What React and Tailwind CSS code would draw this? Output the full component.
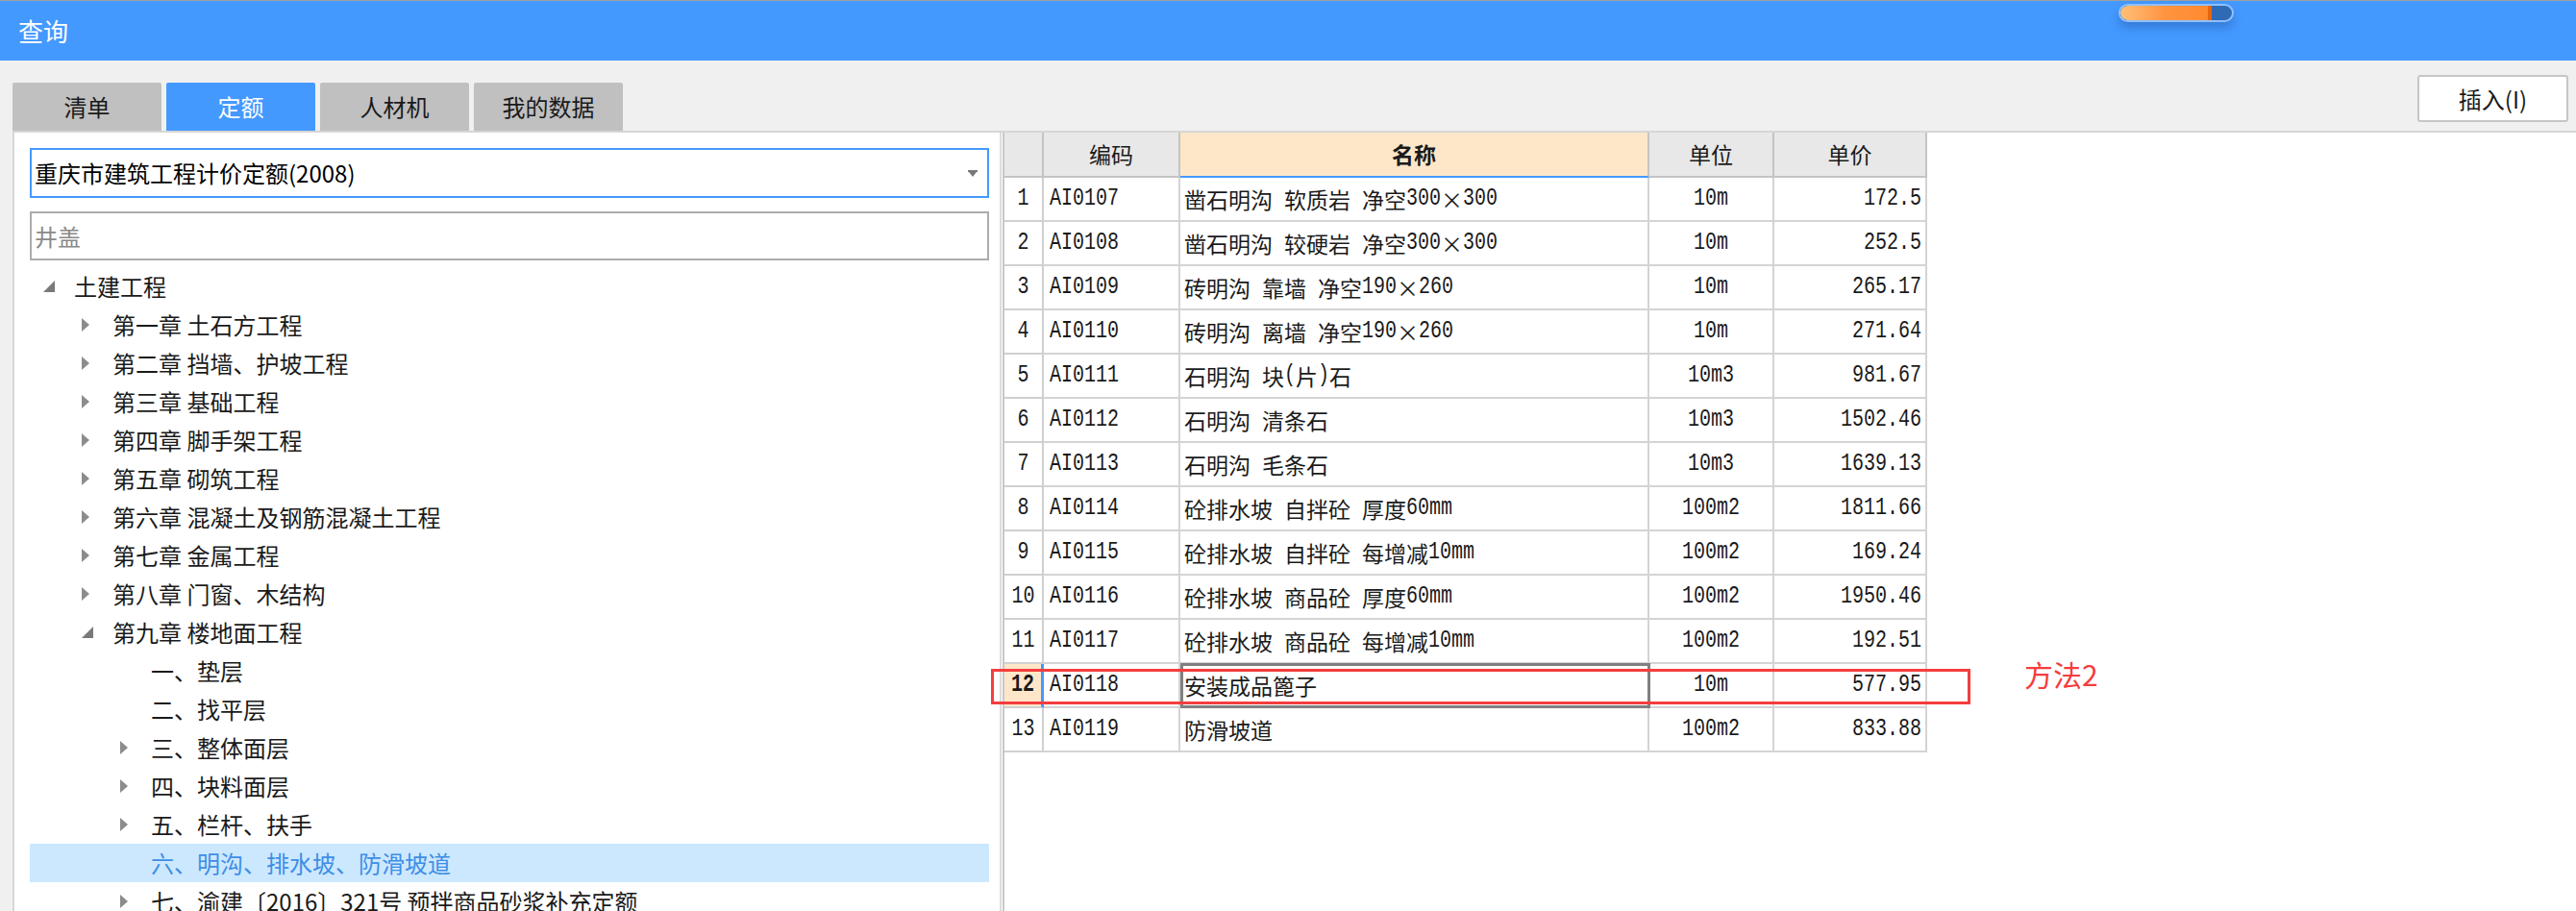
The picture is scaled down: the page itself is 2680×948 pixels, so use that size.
import React from "react";

const tree = [
  { level: 0, icon: "open", label: "土建工程" },
  { level: 1, icon: "closed", label: "第一章 土石方工程" },
  { level: 1, icon: "closed", label: "第二章 挡墙、护坡工程" },
  { level: 1, icon: "closed", label: "第三章 基础工程" },
  { level: 1, icon: "closed", label: "第四章 脚手架工程" },
  { level: 1, icon: "closed", label: "第五章 砌筑工程" },
  { level: 1, icon: "closed", label: "第六章 混凝土及钢筋混凝土工程" },
  { level: 1, icon: "closed", label: "第七章 金属工程" },
  { level: 1, icon: "closed", label: "第八章 门窗、木结构" },
  { level: 1, icon: "open", label: "第九章 楼地面工程" },
  { level: 2, icon: null, label: "一、垫层" },
  { level: 2, icon: null, label: "二、找平层" },
  { level: 2, icon: "closed", label: "三、整体面层" },
  { level: 2, icon: "closed", label: "四、块料面层" },
  { level: 2, icon: "closed", label: "五、栏杆、扶手" },
  { level: 2, icon: null, label: "六、明沟、排水坡、防滑坡道", selected: true },
  { level: 2, icon: "closed", label: "七、渝建〔2016〕321号 预拌商品砂浆补充定额" },
];

const rows = [
  ["AI0107", "凿石明沟 软质岩 净空300×300", "10m", "172.5"],
  ["AI0108", "凿石明沟 较硬岩 净空300×300", "10m", "252.5"],
  ["AI0109", "砖明沟 靠墙 净空190×260", "10m", "265.17"],
  ["AI0110", "砖明沟 离墙 净空190×260", "10m", "271.64"],
  ["AI0111", "石明沟 块(片)石", "10m3", "981.67"],
  ["AI0112", "石明沟 清条石", "10m3", "1502.46"],
  ["AI0113", "石明沟 毛条石", "10m3", "1639.13"],
  ["AI0114", "砼排水坡 自拌砼 厚度60mm", "100m2", "1811.66"],
  ["AI0115", "砼排水坡 自拌砼 每增减10mm", "100m2", "169.24"],
  ["AI0116", "砼排水坡 商品砼 厚度60mm", "100m2", "1950.46"],
  ["AI0117", "砼排水坡 商品砼 每增减10mm", "100m2", "192.51"],
  ["AI0118", "安装成品篦子", "10m", "577.95"],
  ["AI0119", "防滑坡道", "100m2", "833.88"],
];

const indent = ["pl-0", "pl-[40px]", "pl-[80px]"];

// ascii runs in a narrow mono face, CJK in Noto
const Mixed = ({ text, bold }) =>
  text
    .split(/([\x20-\x7e]+)/)
    .filter(Boolean)
    .map((p, i) =>
      /^[\x20-\x7e]+$/.test(p) ? (
        <span
          key={i}
          className={`inline-block whitespace-pre scale-y-[1.25] font-['Liberation_Mono',monospace] text-[20px] ${bold ? "font-bold" : ""}`}
        >
          {p}
        </span>
      ) : (
        <span key={i}>{p}</span>
      )
    );

const Arrow = ({ icon }) => {
  if (icon === "open")
    return (
      <svg width="12" height="12" viewBox="0 0 12 12">
        <polygon points="12,0 12,12 0,12" fill="#7a7a7a" />
      </svg>
    );
  if (icon === "closed")
    return (
      <svg width="8" height="14" viewBox="0 0 8 14">
        <polygon points="0,0 8,7 0,14" fill="#8c8c8c" />
      </svg>
    );
  return null;
};

export default function App() {
  const tabs = ["清单", "定额", "人材机", "我的数据"];

  return (
    <div className="w-[2680px] h-[948px] overflow-hidden flex flex-col bg-[#f0f0f0] font-['Noto_Sans_CJK_SC','Noto_Sans',sans-serif] text-[#1a1a1a]">
      {/* title bar */}
      <div className="relative h-[63px] shrink-0 border-t border-[#a0a0a0] bg-[#4499ff] flex items-center pl-[19px]">
        <span className="text-[26px] leading-none text-white">查询</span>
        <div className="absolute left-[2204px] top-[3px] w-[120px] h-[19px] rounded-full border-2 border-[#8ec0ff] bg-[#2f6ab5] shadow-[0_6px_10px_rgba(30,70,140,0.35)] overflow-hidden">
          <div className="h-full w-[82%] rounded-l-full bg-gradient-to-r from-[#ffc078] via-[#ff9440] to-[#ff8a30] border-r-[4px] border-[#e8650f]" />
        </div>
      </div>

      {/* tab row */}
      <div className="h-[73px] shrink-0 flex justify-between pl-[13px] pr-[8px]">
        <div className="self-end flex gap-[5px]">
          {tabs.map((t) => (
            <div
              key={t}
              className={`w-[155px] h-[50px] rounded-t-[2px] flex items-center justify-center text-[24px] ${
                t === "定额" ? "bg-[#4499ff] text-white" : "bg-[#c0c0c0] text-[#1a1a1a]"
              }`}
            >
              {t}
            </div>
          ))}
        </div>
        <button className="mt-[15px] w-[157px] h-[49px] rounded-[3px] border-2 border-[#c6c6c6] bg-white text-[24px] text-[#1a1a1a] flex items-center justify-center">
          插入(I)
        </button>
      </div>

      {/* content */}
      <div className="flex-1 min-h-0 pl-[13px]">
        <div className="h-full flex border-t-2 border-l-2 border-[#d6d6d6] bg-white">
          {/* left panel */}
          <div className="w-[1027px] shrink-0 border-r-2 border-[#dcdcdc] pl-[16px] pr-[11px] pt-[16px] overflow-hidden">
            <div className="h-[52px] border-2 border-[#4499ff] flex items-center justify-between pl-[3px] pr-[10px]">
              <span className="text-[24px] text-black">重庆市建筑工程计价定额(2008)</span>
              <svg width="10" height="7" viewBox="0 0 10 7">
                <rect x="0" y="0" width="10" height="2" fill="#7a7a7a" />
                <polygon points="1,2 9,2 5,7" fill="#7a7a7a" />
              </svg>
            </div>
            <div className="mt-[14px] h-[51px] border-2 border-[#acacac] flex items-center pl-[3px]">
              <span className="text-[24px] text-[#8a8a8a]">井盖</span>
            </div>
            <div className="mt-[7px] flex flex-col">
              {tree.map((n) => (
                <div
                  key={n.label}
                  className={`h-[40px] shrink-0 flex items-center ${indent[n.level]} ${
                    n.selected ? "bg-[#cce8ff] text-[#3d8ee6]" : "text-[#1a1a1a]"
                  }`}
                >
                  <div className="w-[46px] shrink-0 pl-[14px] flex items-center">
                    <Arrow icon={n.icon} />
                  </div>
                  <span className="text-[24px] whitespace-nowrap">{n.label}</span>
                </div>
              ))}
            </div>
          </div>

          <div className="w-[1px] shrink-0" />

          {/* right panel */}
          <div className="relative flex-1 border-l-2 border-[#c8c8c8]">
            <div className="grid grid-cols-[41px_142px_488px_130px_159px] w-fit text-[23px] text-[#1a1a1a]">
              <div className="h-[47px] border-r-2 border-b-2 border-[#c4c4c4] bg-[#e8e8e8]" />
              <div className="h-[47px] border-r-2 border-b-2 border-[#c4c4c4] bg-[#e8e8e8] flex items-center justify-center">编码</div>
              <div className="h-[47px] border-r-2 border-b-2 border-[#c4c4c4] border-b-[#4499ff] bg-[#fee7c9] flex items-center justify-center font-bold">名称</div>
              <div className="h-[47px] border-r-2 border-b-2 border-[#c4c4c4] bg-[#e8e8e8] flex items-center justify-center">单位</div>
              <div className="h-[47px] border-r-2 border-b-2 border-[#c4c4c4] bg-[#e8e8e8] flex items-center justify-center">单价</div>

              {rows.map(([code, name, unit, price], i) => {
                const active = i === 11;
                return (
                  <React.Fragment key={code}>
                    <div
                      className={`h-[46px] border-b-2 border-[#d0d0d0] flex items-center justify-center ${
                        active ? "bg-[#fee7c9] border-r-[3px] border-r-[#4499ff]" : "bg-white border-r-2"
                      }`}
                    >
                      <Mixed text={String(i + 1)} bold={active} />
                    </div>
                    <div className="h-[46px] border-r-2 border-b-2 border-[#d4d4d4] flex items-center pl-[6px]">
                      <Mixed text={code} />
                    </div>
                    <div className="relative h-[46px] border-r-2 border-b-2 border-[#d4d4d4] flex items-center pl-[4px] whitespace-nowrap">
                      <Mixed text={name} />
                      {active && (
                        <div className="absolute left-0 -top-[1px] -right-[3px] -bottom-[2px] border-[3px] border-[#808080]" />
                      )}
                    </div>
                    <div className="h-[46px] border-r-2 border-b-2 border-[#d4d4d4] flex items-center justify-center">
                      <Mixed text={unit} />
                    </div>
                    <div className="h-[46px] border-r-2 border-b-2 border-[#d4d4d4] flex items-center justify-end pr-[4px]">
                      <Mixed text={price} />
                    </div>
                  </React.Fragment>
                );
              })}
            </div>

            {/* red annotation */}
            <div className="absolute left-[-14px] top-[558px] w-[1019px] h-[37px] border-[3px] border-[#f53d3d]" />
            <div className="absolute left-[1061px] top-[545px] text-[30px] leading-[36px] text-[#f53d3d]">方法2</div>
          </div>
        </div>
      </div>
    </div>
  );
}
